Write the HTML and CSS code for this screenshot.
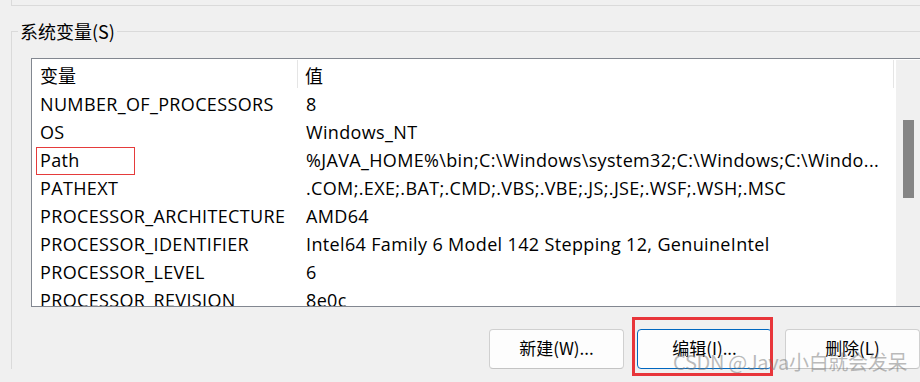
FILE: index.html
```html
<!DOCTYPE html>
<html lang="zh-CN">
<head>
<meta charset="utf-8">
<title>系统变量</title>
<link rel="stylesheet" href="styles.css">
</head>
<body>
<div class="prev-group"></div>
<fieldset class="group">
  <legend class="group-title">系统变量(S)</legend>
  <div class="list">
    <div class="list-body">
      <div class="list-head">
        <div class="cell name">变量</div>
        <div class="cell value">值</div>
        <div class="head-end"></div>
      </div>
      <div class="row"><div class="cell name">NUMBER_OF_PROCESSORS</div><div class="cell value">8</div></div>
      <div class="row"><div class="cell name">OS</div><div class="cell value">Windows_NT</div></div>
      <div class="row"><div class="cell name marked">Path</div><div class="cell value">%JAVA_HOME%\bin;C:\Windows\system32;C:\Windows;C:\Windo...</div></div>
      <div class="row"><div class="cell name">PATHEXT</div><div class="cell value">.COM;.EXE;.BAT;.CMD;.VBS;.VBE;.JS;.JSE;.WSF;.WSH;.MSC</div></div>
      <div class="row"><div class="cell name">PROCESSOR_ARCHITECTURE</div><div class="cell value">AMD64</div></div>
      <div class="row"><div class="cell name">PROCESSOR_IDENTIFIER</div><div class="cell value">Intel64 Family 6 Model 142 Stepping 12, GenuineIntel</div></div>
      <div class="row"><div class="cell name">PROCESSOR_LEVEL</div><div class="cell value">6</div></div>
      <div class="row"><div class="cell name">PROCESSOR_REVISION</div><div class="cell value">8e0c</div></div>
    </div>
    <div class="scrollbar"><div class="thumb"></div></div>
  </div>
  <div class="buttons">
    <button class="btn">新建(W)...</button>
    <button class="btn btn-default marked-btn">编辑(I)...</button>
    <button class="btn">删除(L)</button>
  </div>
</fieldset>
<div class="watermark">CSDN @Java小白就会发呆</div>
</body>
</html>
```

FILE: styles.css
```css
html, body {
  margin: 0;
  padding: 0;
}
body {
  width: 920px;
  height: 382px;
  overflow: hidden;
  background: #f0f0f0;
  font-family: "Open Sans", "Noto Sans CJK SC", sans-serif;
  font-size: 18px;
  color: #000;
  position: relative;
}
.prev-group {
  margin-left: 11px;
  height: 5px;
  border-left: 1px solid #dadada;
  border-bottom: 1px solid #dadada;
}
.group {
  margin: 13px 0 0 11px;
  padding: 0 0 0 19px;
  border: none;
  border-top: 1px solid #dadada;
  border-left: 1px solid #dadada;
  min-width: 0;
}
.group-title {
  margin-left: -13px;
  padding: 0 2px;
  line-height: 24px;
  height: 24px;
  font-family: "Noto Sans CJK SC", sans-serif;
  font-size: 18px;
}
.list {
  margin-top: 15px;
  width: 889px;
  height: 247px;
  border: 1px solid #828790;
  background: #fff;
  display: flex;
  overflow: hidden;
}
.list-body {
  flex: 1;
  overflow: hidden;
  min-width: 0;
}
.list-head {
  display: flex;
  height: 31px;
  align-items: stretch;
}
.list-head .cell {
  font-family: "Noto Sans CJK SC", sans-serif;
  padding-top: 1px;
  box-sizing: border-box;
  margin: 1px 0 2px;
  line-height: 29px;
  border-right: 1px solid #e5e5e5;
}
.list-head .value {
  flex: 1;
  padding-left: 7px;
}
.head-end {
  width: 2px;
}
.row {
  display: flex;
  height: 28px;
  line-height: 28px;
}
.row .cell {
  letter-spacing: 0.35px;
}
.cell {
  white-space: nowrap;
  overflow: hidden;
}
.name {
  width: 266px;
  padding-left: 8px;
  box-sizing: border-box;
  flex: none;
}
.row .value {
  padding-left: 8px;
  flex: 1;
}
.marked {
  position: relative;
  overflow: visible;
}
.marked::after {
  content: "";
  position: absolute;
  left: 4px;
  top: 1px;
  width: 97px;
  height: 26px;
  border: 1px solid #e53b3b;
}
.scrollbar {
  width: 25px;
  flex: none;
  background: #f0f0f0;
  margin-top: 1px;
  position: relative;
}
.thumb {
  position: absolute;
  left: 7px;
  top: 60px;
  width: 11px;
  height: 78px;
  background: #858585;
}
.buttons {
  width: 891px;
  box-sizing: border-box;
  padding-right: 2px;
  margin-top: 22px;
  display: flex;
  justify-content: flex-end;
  gap: 13px;
}
.btn {
  width: 135px;
  height: 40px;
  box-sizing: border-box;
  background: #fdfdfd;
  border: 1px solid #d0d0d0;
  border-bottom-color: #c4c4c4;
  border-radius: 4px;
  font-family: "Noto Sans CJK SC", sans-serif;
  font-size: 17px;
  color: #000;
  padding: 0 0 3px;
  margin: 0;
}
.btn-default {
  border-color: #0067c0;
}
.marked-btn {
  position: relative;
}
.marked-btn::after {
  content: "";
  position: absolute;
  left: -6px;
  top: -13px;
  right: -2px;
  bottom: -8px;
  border: 3px solid #e8353a;
}
.watermark {
  position: absolute;
  left: 673px;
  top: 348px;
  font-family: "Noto Sans CJK SC", sans-serif;
  font-size: 20px;
  line-height: 28px;
  color: rgba(120, 120, 120, 0.5);
  white-space: nowrap;
  letter-spacing: -0.3px;
}
```
